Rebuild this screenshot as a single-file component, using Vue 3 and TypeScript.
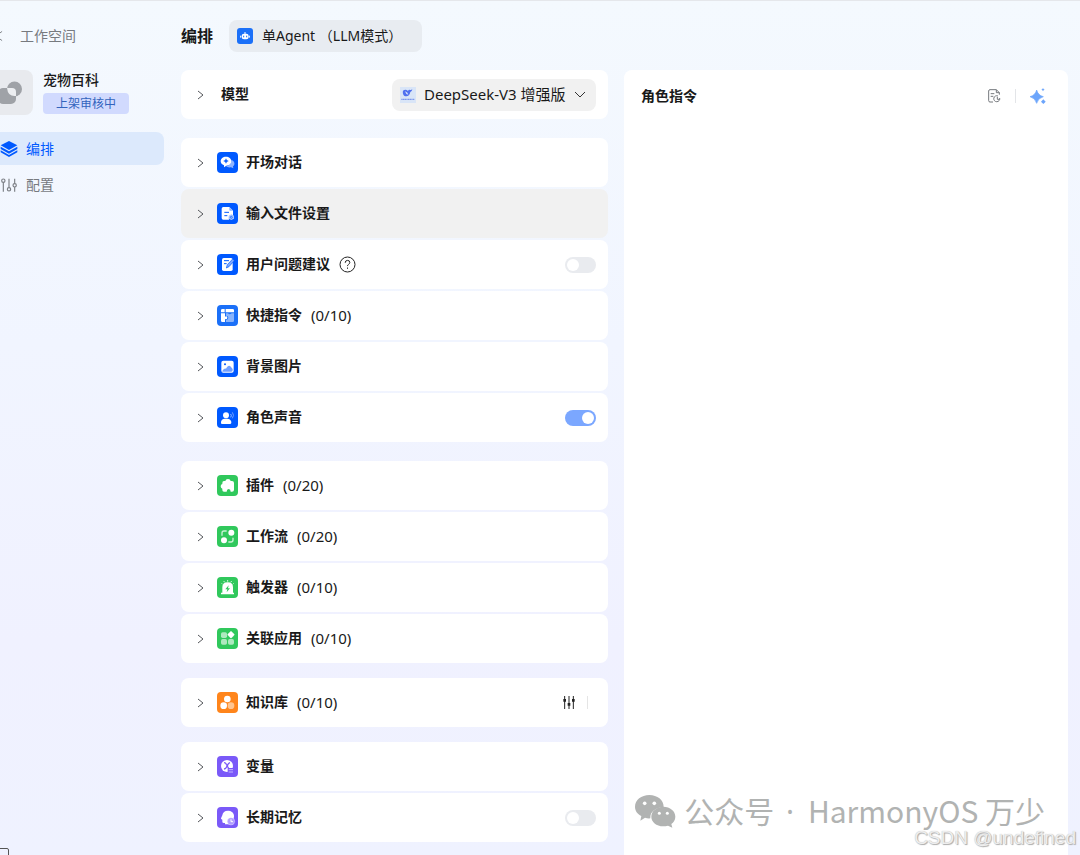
<script setup lang="ts">
import { reactive, ref } from 'vue'

interface Shape {
  d: string
  fill?: string
  stroke?: string
  w?: number
}

interface Row {
  key: string
  title: string
  count?: string
  color: string
  shapes: Shape[]
  help?: boolean
  toggle?: boolean
  tune?: boolean
  hovered?: boolean
}

const circle = (cx: number, cy: number, r: number): string =>
  `M${cx - r} ${cy}a${r} ${r} 0 1 0 ${2 * r} 0a${r} ${r} 0 1 0 ${-2 * r} 0Z`

const box = (x: number, y: number, w: number, h: number, r: number): string =>
  `M${x + r} ${y}h${w - 2 * r}a${r} ${r} 0 0 1 ${r} ${r}v${h - 2 * r}a${r} ${r} 0 0 1 ${-r} ${r}h${2 * r - w}a${r} ${r} 0 0 1 ${-r} ${-r}v${2 * r - h}a${r} ${r} 0 0 1 ${r} ${-r}Z`

const blue = '#0059ff'
const green = '#30c85c'
const purple = '#7a59f8'
const white = '#fff'

const groups: { key: string; rows: Row[] }[] = [
  {
    key: 'talk',
    rows: [
      {
        key: 'opening',
        title: '开场对话',
        color: blue,
        shapes: [
          { d: 'M43 23c12 5 11 16 5 20l1 6-7-3c-7 1-12-1-15-4 10 0 17-8 16-19Z', fill: '#8fb4ff' },
          { d: 'M27 14c9 0 16 6 16 14s-7 13-15 13l-7 5v-6c-6-2-10-6-10-12 0-8 7-14 16-14Z', fill: white },
          { d: 'M27 20q1 6 7 7-6 1-7 7-1-6-7-7 6-1 7-7Z', fill: blue, stroke: blue, w: 1 },
        ],
      },
      {
        key: 'files',
        title: '输入文件设置',
        color: blue,
        hovered: true,
        shapes: [
          { d: 'M19 12h18l11 11v13a11 11 0 0 0-12 14H19q-5 0-5-5V17q0-5 5-5Z', fill: white },
          { d: 'M37 12v8q0 3 3 3h8Z', fill: '#8fb4ff' },
          { d: 'M22 28h14M22 38h9', stroke: blue, w: 3 },
          { d: 'M43 34l8 4v9l-8 4-8-4v-9Z', fill: '#a8c5ff' },
          { d: circle(43, 43, 3), stroke: blue, w: 2 },
        ],
      },
      {
        key: 'suggestions',
        title: '用户问题建议',
        color: blue,
        help: true,
        toggle: true,
        shapes: [
          { d: box(15, 12, 32, 39, 5), fill: white },
          { d: 'M21 20h15M21 29h8', stroke: blue, w: 3 },
          { d: 'M28 42l3-10 16-17 5 5-16 18Z', fill: '#7fa9ff', stroke: blue, w: 2 },
        ],
      },
      {
        key: 'shortcuts',
        title: '快捷指令',
        count: '(0/10)',
        color: '#1b70f8',
        shapes: [
          { d: 'M16 12h7v10H12v-6q0-4 4-4ZM26 12h21q4 0 4 4v6H26Z', fill: white },
          { d: 'M12 25h12v10q6-3 7 3-1 6-7 4v9h-8q-4 0-4-4Z', fill: white },
          { d: 'M27 25h6q5 6 11 0h7v22q0 4-4 4H27v-6q7-1 7-7t-7-6Z', fill: '#89b4fc' },
        ],
      },
      {
        key: 'background',
        title: '背景图片',
        color: blue,
        shapes: [
          { d: box(13, 14, 37, 36, 6), fill: white },
          { d: 'M16 46c3-6 6-9 11-8 4-7 9-11 13-7l7 8v4q0 4-4 4H16Z', fill: '#719fff' },
          { d: circle(24, 25, 3), fill: blue },
        ],
      },
      {
        key: 'voice',
        title: '角色声音',
        color: blue,
        toggle: true,
        shapes: [
          { d: circle(27, 25, 9), fill: white },
          { d: 'M12 48q-1-11 10-13h10q12 2 11 13-1 3-4 3H15q-3 0-3-3Z', fill: white },
          { d: 'M41 21q4 5 0 10', stroke: '#9bbeff', w: 3 },
          { d: 'M46 16q7 9 0 18', stroke: '#709fff', w: 3 },
        ],
      },
    ],
  },
  {
    key: 'skills',
    rows: [
      {
        key: 'plugins',
        title: '插件',
        count: '(0/20)',
        color: green,
        shapes: [
          {
            d: 'M21 18h4q1-6 8-6t8 6h4q6 0 6 6v20q0 6-6 6h-4q0-8-6-8t-6 8h-8q-5 0-5-5v-4q-5-1-5-7t5-7v-3q0-6 5-6Z',
            fill: white,
          },
        ],
      },
      {
        key: 'workflow',
        title: '工作流',
        count: '(0/20)',
        color: green,
        shapes: [
          { d: circle(43, 20, 9), fill: white },
          { d: circle(21, 43, 9), fill: white },
          { d: 'M15 29v-8q0-6 6-6h8', stroke: '#c9f1d5', w: 4 },
          { d: 'M48 35v7q0 6-6 6h-8', stroke: '#c9f1d5', w: 4 },
        ],
      },
      {
        key: 'triggers',
        title: '触发器',
        count: '(0/10)',
        color: green,
        shapes: [
          { d: 'M16 47V31q0-15 16-15t16 15v16h3v5H12v-5Z', fill: white },
          { d: 'M32 9v5M20 12l3 4M44 12l-3 4M14 19l3 3M50 19l-3 3', stroke: '#d5f5df', w: 3 },
          { d: 'M35 25l-10 12h6l-2 9 10-12h-6Z', fill: green },
        ],
      },
      {
        key: 'apps',
        title: '关联应用',
        count: '(0/10)',
        color: green,
        shapes: [
          { d: box(12, 13, 18, 17, 5), fill: '#aee9bf' },
          { d: box(12, 33, 18, 17, 5), fill: '#aee9bf' },
          { d: box(33, 33, 18, 17, 5), fill: '#aee9bf' },
          { d: 'M40 11q2-2 4 0l7 7q2 2 0 4l-7 7q-2 2-4 0l-7-7q-2-2 0-4Z', fill: white, stroke: white, w: 1 },
        ],
      },
    ],
  },
  {
    key: 'knowledge',
    rows: [
      {
        key: 'library',
        title: '知识库',
        count: '(0/10)',
        color: '#ff851b',
        tune: true,
        shapes: [
          { d: circle(31, 21, 10), fill: white },
          { d: circle(20, 41, 10), fill: white },
          { d: circle(42, 41, 10), fill: '#ffc591' },
        ],
      },
    ],
  },
  {
    key: 'memory',
    rows: [
      {
        key: 'variables',
        title: '变量',
        color: purple,
        shapes: [
          { d: circle(30, 30, 18), fill: white },
          { d: 'M21 20q5 0 7 5l6 11q2 4 6 3M39 20q-5 1-8 9-4 9-10 10', stroke: purple, w: 4 },
          { d: box(32, 36, 19, 17, 2), fill: purple },
          { d: 'M35 41h13M35 48h13', stroke: '#c5b7ff', w: 3 },
        ],
      },
      {
        key: 'longterm',
        title: '长期记忆',
        color: purple,
        toggle: true,
        shapes: [
          { d: 'M35 11c-11-1-18 5-19 14l-4 9q-1 3 4 4v6q0 4 5 4h3v4h24V38c8-14 0-26-13-27Z', fill: white },
          { d: circle(42, 43, 11), fill: '#b09dff', stroke: white, w: 1 },
          { d: 'M42 37v7h6', stroke: white, w: 3 },
        ],
      },
    ],
  },
]

const toggles = reactive<Record<string, boolean>>({ suggestions: false, voice: true, longterm: false })
const model = ref('DeepSeek-V3 增强版')
</script>

<template>
  <div class="page">
    <aside class="sidebar">
      <a class="back" href="#">
        <svg class="back-icon" viewBox="0 0 12 12"><path d="M11 1L4 6l7 5" /></svg>
        <span>工作空间</span>
      </a>
      <div class="profile">
        <svg class="avatar" viewBox="0 0 45 45">
          <circle cx="26.500" cy="19" r="7.500" fill="#9fa2a7" />
          <rect x="10" y="18" width="18" height="16" rx="5" fill="#9fa2a7" />
          <path d="M19 18h5q4 0 4 4v4q-8 1-9-8Z" fill="#eceef1" />
        </svg>
        <div class="profile-text">
          <strong class="name">宠物百科</strong>
          <span class="status">上架审核中</span>
        </div>
      </div>
      <nav class="nav">
        <a class="nav-item active" href="#">
          <svg class="nav-icon" viewBox="0 0 54 54">
            <path d="M27 3l25 13-25 14L2 16Z" fill="#0059ff" />
            <path
              d="M2 20l25 14 25-14v7L27 41 2 27ZM2 31l25 14 25-14v6L27 51 2 37Z"
              fill="#0059ff"
            />
          </svg>
          <span>编排</span>
        </a>
        <a class="nav-item" href="#">
          <svg class="nav-icon" viewBox="0 0 54 54">
            <g fill="none" stroke="#7d8086" stroke-width="3.500">
              <circle cx="10" cy="14" r="5" />
              <path d="M10 19v28M27 8v27M44 8v15M44 33v14" />
              <circle cx="27" cy="40" r="5" />
              <circle cx="44" cy="28" r="5" />
            </g>
          </svg>
          <span>配置</span>
        </a>
      </nav>
    </aside>

    <main class="main">
      <header class="header">
        <h1 class="heading">编排</h1>
        <button class="mode" type="button">
          <svg class="mode-icon" viewBox="0 0 48 48">
            <rect width="48" height="48" rx="9" fill="#1b70f8" />
            <rect x="14" y="17" width="21" height="17" rx="7" fill="#fff" />
            <path d="M24 12v6M11 23v6M37 23v6" stroke="#fff" stroke-width="3" />
            <path d="M20 23v5M29 23v5" stroke="#1b70f8" stroke-width="3" />
          </svg>
          <span>单Agent （LLM模式）</span>
        </button>
      </header>

      <div class="columns">
        <div class="settings">
          <section class="card">
            <button class="expand" type="button">
              <svg class="chevron" viewBox="0 0 8 12"><path d="M1 2l5 4-5 4" /></svg>
              <span class="title">模型</span>
            </button>
            <label class="model">
              <svg class="model-icon" viewBox="0 0 48 48" aria-hidden="true">
                <rect width="48" height="48" fill="#d9e5f7" />
                <path
                  d="M9 11q8-6 15 1 1-4 5-4 3 3 8-1-1 6-6 8-3 13-12 13C11 28 7 20 9 11Z"
                  fill="#5070ef"
                />
                <path d="M15 13q8 2 10 10-8-1-10-10Z" fill="#d9e5f7" />
                <path d="M4 37h40" stroke="#7d98ed" stroke-width="4" stroke-dasharray="4 1" />
              </svg>
              <select v-model="model" class="model-select" aria-label="模型">
                <option>DeepSeek-V3 增强版</option>
              </select>
              <svg class="arrow" viewBox="0 0 12 8" aria-hidden="true"><path d="M1 1l5 5 5-5" /></svg>
            </label>
          </section>

          <div v-for="group in groups" :key="group.key" class="group" :class="group.key">
            <section v-for="row in group.rows" :key="row.key" class="card" :class="{ hovered: row.hovered }">
              <button class="expand" type="button">
                <svg class="chevron" viewBox="0 0 8 12"><path d="M1 2l5 4-5 4" /></svg>
                <svg class="icon" viewBox="0 0 63 63">
                  <rect width="63" height="63" rx="12" :fill="row.color" />
                  <path
                    v-for="(shape, i) in row.shapes"
                    :key="i"
                    :d="shape.d"
                    :fill="shape.fill ?? 'none'"
                    :stroke="shape.stroke ?? 'none'"
                    :stroke-width="shape.w ?? 0"
                  />
                </svg>
                <span class="title">{{ row.title }}</span>
                <span v-if="row.count" class="count">{{ row.count }}</span>
              </button>
              <button v-if="row.help" class="help" type="button" aria-label="说明">
                <svg viewBox="0 0 17 17">
                  <circle cx="8.500" cy="8.500" r="7.500" />
                  <path d="M6.200 6.800q0-2.400 2.300-2.400t2.300 2q0 1.200-1.300 2-1 .6-1 1.700M8.500 11.500v1.300" />
                </svg>
              </button>
              <button v-if="row.tune" class="tune" type="button" aria-label="设置">
                <svg viewBox="0 0 36 39">
                  <path d="M5 0v39M18 0v39M31 0v39" stroke="#222" stroke-width="3" />
                  <path d="M5 9v8M18 21v8M31 9v8" stroke="#222" stroke-width="8" />
                </svg>
              </button>
              <input
                v-if="row.toggle"
                v-model="toggles[row.key]"
                class="switch"
                type="checkbox"
                role="switch"
                :aria-label="row.title"
              />
            </section>
          </div>
        </div>

        <section class="prompt">
          <header class="prompt-head">
            <h2 class="prompt-title">角色指令</h2>
            <button class="tool history" type="button" aria-label="历史">
              <svg viewBox="0 0 42 42">
                <g fill="none" stroke="#75787d" stroke-width="3">
                  <path d="M18 39H9q-4 0-4-4V6q0-4 4-4h19l9 9v6M28 2v9h9M11 14h11M11 22h8" />
                  <path d="M38 27a9 9 0 1 1-5-6M31 24v7h7" />
                </g>
              </svg>
            </button>
            <button class="tool sparkle" type="button" aria-label="优化">
              <svg viewBox="0 0 48 48">
                <path d="M20 6q4 16 20 20-16 4-20 20Q16 30 0 26 16 22 20 6Z" fill="#6ca5fb" stroke="#6ca5fb" stroke-width="2" />
                <path d="M39 0q1 4 5 5-4 1-5 5-1-4-5-5 4-1 5-5Z" fill="#6ca5fb" />
                <path d="M40 34l7 7-7 7-7-7Z" fill="#6ca5fb" />
              </svg>
            </button>
          </header>
        </section>
      </div>
    </main>

    <span class="corner"></span>
    <div class="account">
      <svg class="wechat" viewBox="0 0 123 99">
        <path
          d="M43 0c24 0 43 15 43 35v1C63 37 46 50 46 67v3q-8 1-16-2l-14 9 3-14C7 57 0 47 0 35 0 15 19 0 43 0Z"
          fill="#b1b3b2"
        />
        <path
          d="M85 35c20 0 36 13 36 30 0 9-5 17-12 22l3 11-13-6c-29 7-50-8-50-27 0-17 16-30 36-30Z"
          fill="#b1b3b2"
        />
        <g fill="#fff">
          <circle cx="29" cy="25" r="5.500" />
          <circle cx="58" cy="25" r="5.500" />
          <circle cx="73" cy="55" r="4.500" />
          <circle cx="97" cy="55" r="4.500" />
        </g>
      </svg>
      <span>公众号<span class="dot"> · </span>HarmonyOS 万少</span>
    </div>
    <div class="credit">CSDN @undefined</div>
  </div>
</template>

<style>
body {
  margin: 0;
}
</style>

<style scoped>
.page {
  position: relative;
  box-sizing: border-box;
  display: flex;
  min-height: 100vh;
  overflow: hidden;
  border-top: 1px solid #e5e7eb;
  background: linear-gradient(180deg, #f4f9fe 0%, #f1f5ff 40%, #f0f1ff 75%, #eff2ff 100%);
  color: #191919;
  font-family: "Noto Sans", "Noto Sans CJK SC", sans-serif;
  font-size: 14px;
  line-height: 20px;
}

button,
select {
  border: 0;
  padding: 0;
  background: none;
  color: inherit;
  font: inherit;
}

a {
  color: inherit;
  text-decoration: none;
}

svg {
  display: block;
  flex: none;
}

.sidebar {
  flex: none;
  width: 176px;
  margin-left: -12px;
  padding-top: 25px;
}

.back {
  display: flex;
  align-items: center;
  gap: 17px;
  padding-left: 4px;
  color: #777a7f;
}

.back-icon {
  width: 11px;
  height: 12px;
  fill: none;
  stroke: #777a7f;
}

.profile {
  display: flex;
  gap: 10px;
  margin-top: 24px;
}

.avatar {
  width: 45px;
  height: 45px;
  border-radius: 8px;
  background: #e8eaee;
}

.profile-text {
  display: flex;
  flex-direction: column;
  align-items: flex-start;
  gap: 3px;
}

.name {
  font-weight: 500;
}

.status {
  box-sizing: border-box;
  width: 86px;
  border-radius: 4px;
  background: #d1dafe;
  color: #3364bd;
  font-size: 12px;
  line-height: 21px;
  text-align: center;
}

.nav {
  display: flex;
  flex-direction: column;
  gap: 3px;
  margin-top: 17px;
}

.nav-item {
  display: flex;
  align-items: center;
  gap: 8px;
  height: 33px;
  padding-left: 12px;
  border-radius: 8px;
  color: #777a7f;
}

.nav-item.active {
  background: #dce9fc;
  color: #0059ff;
}

.nav-icon {
  width: 18px;
  height: 18px;
}

.main {
  display: flex;
  flex: 1;
  flex-direction: column;
  min-width: 0;
  padding: 19px 12px 0 17px;
}

.header {
  display: flex;
  align-items: center;
  gap: 16px;
}

.heading {
  margin: 0;
  font-size: 16px;
  font-weight: 700;
}

.mode {
  display: flex;
  align-items: center;
  gap: 9px;
  height: 32px;
  padding: 0 20px 0 8px;
  border-radius: 8px;
  background: #e8ecf1;
}

.mode-icon {
  width: 16px;
  height: 16px;
}

.columns {
  display: grid;
  flex: 1;
  grid-template-columns: 427fr 444fr;
  gap: 16px;
  margin-top: 18px;
}

.settings {
  padding-bottom: 12px;
}

.card {
  box-sizing: border-box;
  display: flex;
  align-items: center;
  height: 49px;
  padding: 0 12px 0 16px;
  border-radius: 8px;
  background: #fff;
}

.card.hovered {
  background: #f1f1f1;
}

.group {
  display: flex;
  flex-direction: column;
  gap: 2px;
  margin-top: 15px;
}

.group.talk,
.group.skills {
  margin-top: 19px;
}

.expand {
  display: flex;
  align-items: center;
}

.chevron {
  width: 8px;
  height: 12px;
  margin-right: 12px;
  fill: none;
  stroke: #55575b;
}

.expand .title {
  margin-left: 4px;
}

.icon {
  width: 21px;
  height: 21px;
}

.expand .icon + .title {
  margin-left: 8px;
}

.title,
.count {
  padding-bottom: 2px;
}

.title {
  font-weight: 700;
}

.count {
  margin-left: 9px;
  font-size: 15px;
}

.model {
  display: flex;
  align-items: center;
  box-sizing: border-box;
  width: 204px;
  height: 32px;
  margin-left: auto;
  padding: 0 10px 0 8px;
  border-radius: 8px;
  background: #f1f1f1;
}

.model-icon {
  width: 16px;
  height: 16px;
}

.model-select {
  flex: 1;
  min-width: 0;
  margin-left: 8px;
  padding-bottom: 2px;
  appearance: none;
  font-size: 15px;
}

.arrow {
  width: 12px;
  height: 8px;
  fill: none;
  stroke: #333;
}

.help {
  margin-left: 9px;
}

.help svg {
  width: 17px;
  height: 17px;
  fill: none;
  stroke: #222;
}

.tune {
  margin-left: auto;
  padding-right: 12px;
  margin-right: 8px;
  border-right: 1px solid #e5e5e5;
}

.tune svg {
  width: 12px;
  height: 13px;
}

.switch {
  display: flex;
  align-items: center;
  box-sizing: border-box;
  width: 31px;
  height: 16px;
  margin: 0 0 0 auto;
  padding: 2px;
  appearance: none;
  border-radius: 8px;
  background: #e9ebef;
}

.switch::before {
  width: 12px;
  height: 12px;
  border-radius: 50%;
  background: #fff;
  content: "";
}

.switch:checked {
  justify-content: flex-end;
  background: #7ba7ff;
}

.prompt {
  border-radius: 8px 8px 0 0;
  background: #fff;
}

.prompt-head {
  display: flex;
  align-items: center;
  height: 51px;
  padding: 0 22px 0 17px;
}

.prompt-title {
  margin: 0;
  font-size: 14px;
  font-weight: 700;
}

.history {
  margin-left: auto;
  padding-right: 14px;
  border-right: 1px solid #e3e5e8;
}

.history svg {
  width: 14px;
  height: 14px;
}

.sparkle {
  padding-left: 14px;
}

.sparkle svg {
  width: 16px;
  height: 16px;
}

.corner {
  position: absolute;
  bottom: -6px;
  left: -6px;
  width: 13px;
  height: 11px;
  border: 1px solid #555;
  border-radius: 2px;
}

.account {
  position: absolute;
  right: 35px;
  bottom: 22px;
  display: flex;
  align-items: center;
  gap: 8px;
  color: #b1b3b2;
  font-family: "Noto Sans CJK SC", sans-serif;
  font-size: 30px;
  font-weight: 400;
  line-height: 42px;
  white-space: nowrap;
}

.dot {
  margin: 0 6px 0 4px;
  font-family: "Noto Sans", sans-serif;
  white-space: pre;
}

.wechat {
  width: 41px;
  height: 33px;
}

.credit {
  position: absolute;
  right: 4px;
  bottom: 5px;
  color: #eee;
  font-family: "Liberation Sans", sans-serif;
  font-size: 19px;
  line-height: 24px;
  text-shadow: 1px 1px 1px #aaa, 0 0 1px #b5b5b5;
}
</style>
